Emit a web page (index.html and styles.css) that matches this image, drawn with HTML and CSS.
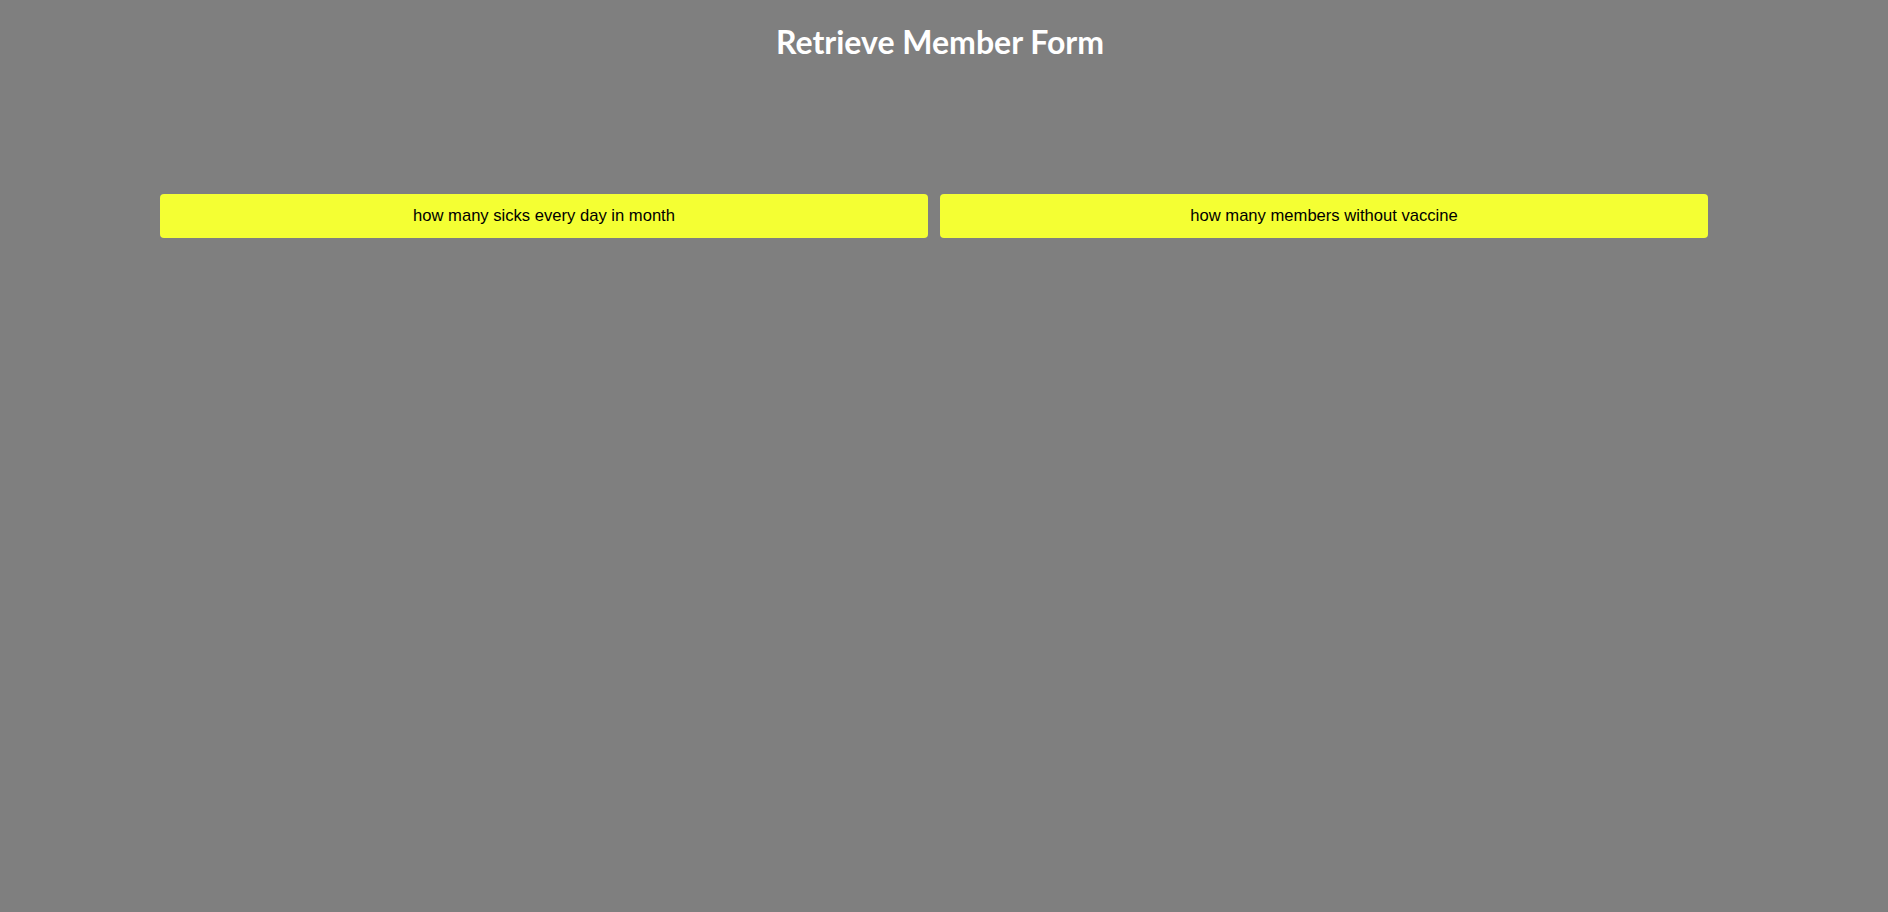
FILE: index.html
```html
<!DOCTYPE html>
<html>
<head>
<meta charset="utf-8">
<link rel="stylesheet" href="styles.css">
</head>
<body>
<h1 class="title">Retrieve Member Form</h1>
<div class="actions">
  <button class="btn">how many sicks every day in month</button>
  <button class="btn">how many members without vaccine</button>
</div>
</body>
</html>
```
FILE: styles.css
```css
html, body {
  margin: 0;
  padding: 0;
  background: #7f7f7f;
  height: 100%;
}
.title {
  margin: 0;
  padding: 22px 8px 0 0;
  font-family: Lato, "Open Sans", sans-serif;
  font-weight: 700;
  font-size: 32px;
  line-height: 40px;
  color: #ffffff;
  text-align: center;
}
.actions {
  display: flex;
  gap: 12px;
  margin: 132px 0 0 160px;
  width: 1548px;
}
.btn {
  flex: 1;
  height: 44px;
  border: none;
  border-radius: 4px;
  background: #f4ff33;
  color: #000;
  font-family: "Liberation Sans", Arial, sans-serif;
  font-size: 16.6px;
  padding: 0;
}
```
